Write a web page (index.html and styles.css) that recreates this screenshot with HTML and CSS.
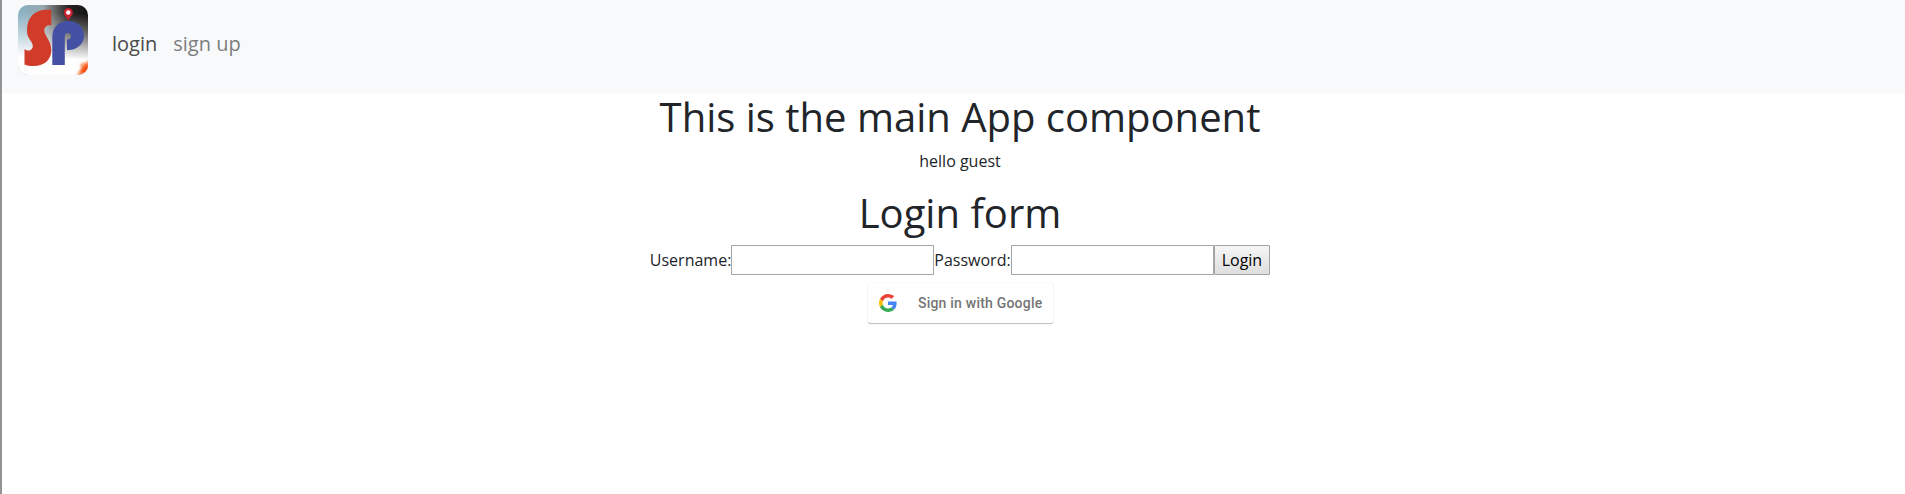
FILE: index.html
```html
<!DOCTYPE html>
<html lang="en">
<head>
<meta charset="utf-8">
<title>App</title>
<link rel="stylesheet" href="styles.css">
</head>
<body>
<div class="app">
  <nav class="navbar">
    <a class="brand" href="#">
      <svg class="logo" viewBox="0 0 70 70">
        <defs>
          <linearGradient id="sky" x1="0" x2="1" y1="0" y2="0"><stop offset="0" stop-color="#86b2c5"/><stop offset=".35" stop-color="#98a8ae"/><stop offset=".55" stop-color="#5d5d5d"/><stop offset=".72" stop-color="#262324"/><stop offset="1" stop-color="#151314"/></linearGradient>
          <linearGradient id="fade" x1=".45" x2=".4" y1="0" y2="1"><stop offset=".1" stop-color="#fff" stop-opacity="0"/><stop offset=".4" stop-color="#fff" stop-opacity=".4"/><stop offset=".76" stop-color="#fff"/></linearGradient>
          <filter id="soft"><feGaussianBlur stdDeviation="1.1"/></filter>
          <clipPath id="tile"><rect width="70" height="70" rx="10"/></clipPath>
        </defs>
        <g clip-path="url(#tile)">
          <path fill="url(#sky)" d="M0 0h70v70H0z"/>
          <path fill="url(#fade)" d="M0 0h70v70H0z"/>
          <g filter="url(#soft)">
            <path fill="#f8a070" d="M72 55l-4 2-6 2 1 4-2 3-3 6h14z"/>
            <path fill="#f8500f" d="M72 58l-5 2-3 3-2 5 10 2z"/>
          </g>
          <path fill="#d13b29" d="M33.300 5v15.500c-4-1-7 1-7 5 0 5 7 10 7 20C33 56 25 61 16 61c-4 0-7-.5-9.500-1.500V44c1.500 1.500 4 2 6 1 2.500-1.500 3-4 1.500-7-2-4-5-6-5-12.500C9 11 18 3 33.300 5z"/>
          <path fill="#4350a3" d="M34.300 60V32c0-10 7-16 16-16 9 0 15.700 6 15.700 14.500C66 39 59 45.500 49 45V34.500c2.500 0 4-1.200 4-3.300S51.700 28 50 28s-3.200 1.200-3.200 3v29z"/>
          <path fill="#c92032" d="M50.300 16c-1-4-4.500-5-4.500-8.500a4.500 4.500 0 0 1 9 0c0 3.500-3.500 4.500-4.500 8.500z"/>
          <circle cx="50.300" cy="7.500" r="2.200" fill="#fff"/>
        </g>
      </svg>
    </a>
    <a class="link active" href="#">login</a>
    <a class="link" href="#">sign up</a>
  </nav>
  <main class="main">
    <h1 class="title">This is the main App component</h1>
    <p class="greeting">hello guest</p>
    <h1 class="title">Login form</h1>
    <form class="form">
      <label for="user">Username:</label><input class="field" id="user" type="text"><label for="pass">Password:</label><input class="field" id="pass" type="password"><button class="submit" type="button">Login</button>
    </form>
    <button class="google" type="button">
      <svg class="google-icon" viewBox="0 0 48 48"><path fill="#EA4335" d="M24 9.500c3.540 0 6.710 1.220 9.210 3.600l6.850-6.850C35.900 2.380 30.470 0 24 0 14.620 0 6.510 5.380 2.560 13.220l7.980 6.190C12.430 13.720 17.740 9.500 24 9.500z"/><path fill="#4285F4" d="M46.980 24.550c0-1.570-.15-3.090-.38-4.550H24v9.020h12.940c-.58 2.960-2.260 5.480-4.780 7.180l7.730 6c4.510-4.180 7.090-10.360 7.090-17.650z"/><path fill="#FBBC05" d="M10.530 28.590c-.48-1.450-.76-2.990-.76-4.590s.27-3.140.76-4.590l-7.980-6.190C.92 16.460 0 20.120 0 24s.92 7.540 2.560 10.780l7.970-6.190z"/><path fill="#34A853" d="M24 48c6.480 0 11.930-2.130 15.890-5.810l-7.730-6c-2.150 1.450-4.920 2.300-8.160 2.300-6.260 0-11.570-4.220-13.470-9.910l-7.980 6.190C6.510 42.620 14.620 48 24 48z"/></svg>
      <span>Sign in with Google</span>
    </button>
  </main>
</div>
</body>
</html>
```
FILE: styles.css
```css
* { box-sizing: border-box; }
html { overflow: hidden; }
body {
  margin: 0;
  overflow: hidden;
  background: #fff;
  color: #212529;
  font: 16px/24px "Open Sans", sans-serif;
}
.app {
  width: 1918px;
  height: 494px;
  border-left: 2px solid #939393;
}
.navbar {
  display: flex;
  align-items: flex-start;
  height: 93px;
  padding: 5px 16px;
  background: #f8f9fa;
  font-size: 20px;
  line-height: 30px;
}
.brand { margin-right: 24px; }
.logo { display: block; width: 70px; height: 70px; }
.link {
  margin: 24px 16px 0 0;
  color: #7c7d7d;
  text-decoration: none;
}
.link.active { color: #4a4b4b; }
.main {
  display: flex;
  flex-direction: column;
  align-items: center;
}
.title {
  margin: 0 0 8px;
  font-size: 40px;
  font-weight: 400;
  line-height: 48px;
}
.greeting { margin: 0 0 16px; }
.form { display: flex; height: 30px; line-height: 30px; }
.field {
  width: 203px;
  height: 30px;
  border: 1px solid #a6a6a6;
  background: #fff;
  font: inherit;
}
.submit {
  height: 30px;
  padding: 0 7px;
  border: 1px solid #a3a3a3;
  border-radius: 1px;
  background: linear-gradient(#f6f6f6, #dedede);
  color: #000;
  font: inherit;
  line-height: 28px;
}
.google {
  display: flex;
  align-items: center;
  gap: 21.500px;
  width: 185px;
  height: 40px;
  margin-top: 8px;
  padding: 0 0 0 11px;
  border: 0;
  border-radius: 2px;
  background: #fff;
  box-shadow: 0 1px 1px rgba(0, 0, 0, .25), 0 0 1px rgba(0, 0, 0, .2);
  color: #757575;
  font: 500 14px/20px Roboto, sans-serif;
  letter-spacing: .21px;
  white-space: nowrap;
}
.google-icon { width: 18px; height: 18px; }
```
